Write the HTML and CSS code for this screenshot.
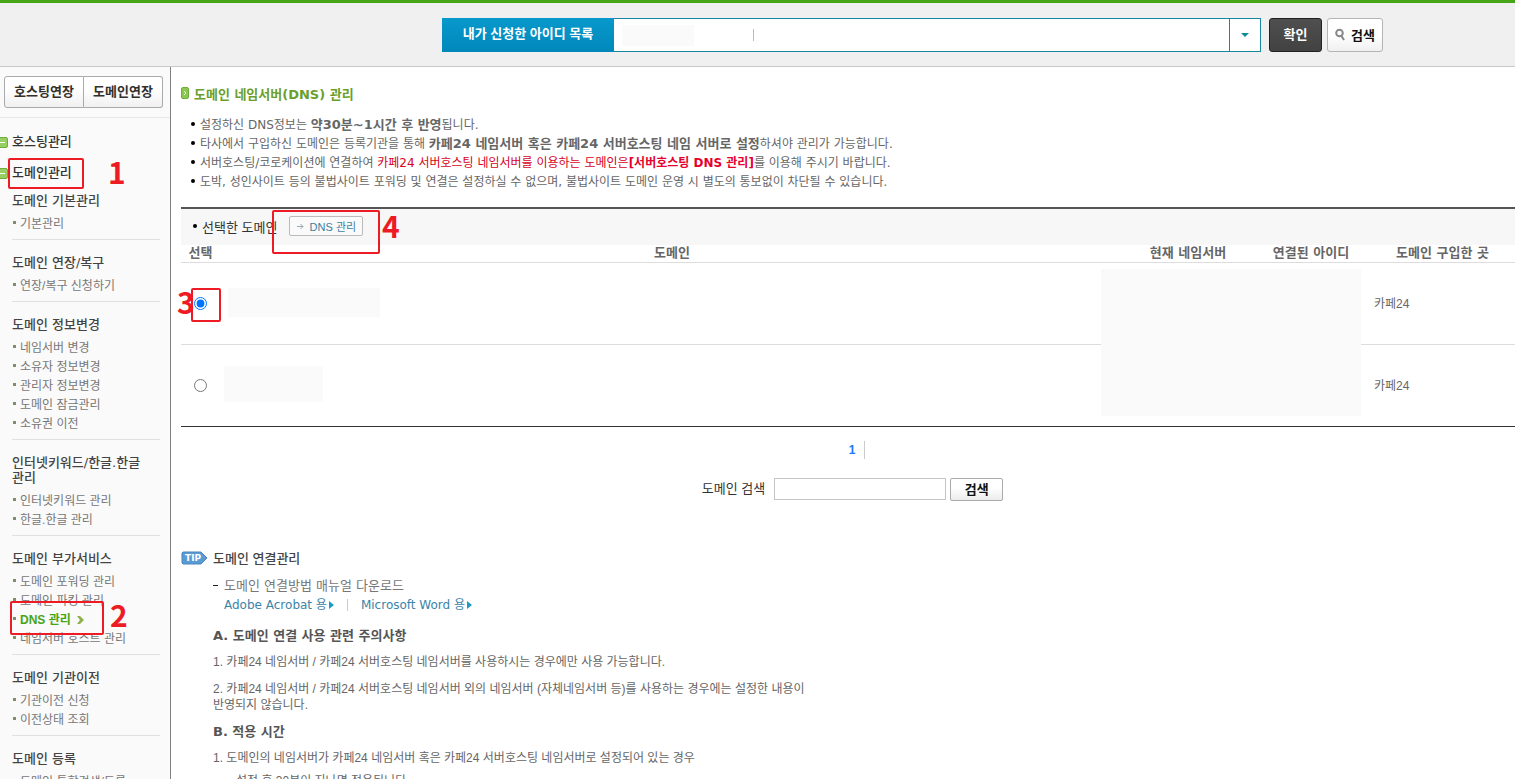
FILE: index.html
```
<!DOCTYPE html>
<html lang="ko">
<head>
    <meta charset="UTF-8">
    <meta name="viewport" content="width=device-width, initial-scale=1.0">
    <title>도메인 네임서버(DNS) 관리</title>
    <link rel="stylesheet" href="styles.css">
</head>
<body>
    <header class="top-bar">
        <div class="id-picker">
            <label class="id-label" for="idList">내가 신청한 아이디 목록</label>
            <div class="id-field">
                <select class="id-select" id="idList"><option></option></select>
                <span class="mask mask-id"></span>
                <span class="id-divider"></span>
                <span class="id-arrow">
                    <svg width="8" height="4" viewBox="0 0 8 4"><path d="M0 0h8L4 4z" fill="#0f8a9d"/></svg>
                </span>
            </div>
        </div>
        <button class="btn-confirm" type="button">확인</button>
        <button class="btn-find" type="button">
            <svg width="11" height="13" viewBox="0 0 11 13" fill="none" stroke="#888" stroke-width="2"><circle cx="4.5" cy="5" r="3.3"/><path d="M6.5 8l2.5 4"/></svg>
            검색
        </button>
    </header>

    <div class="layout">
        <nav class="sidebar">
            <div class="extend-buttons">
                <button type="button">호스팅연장</button>
                <button type="button">도메인연장</button>
            </div>
            <div class="menu">
                <h2 class="menu-head"><a href="#">호스팅관리</a></h2>
                <h2 class="menu-head"><a href="#">도메인관리</a></h2>

                <section class="group">
                    <h3>도메인 기본관리</h3>
                    <ul>
                        <li><a href="#">기본관리</a></li>
                    </ul>
                </section>
                <section class="group">
                    <h3>도메인 연장/복구</h3>
                    <ul>
                        <li><a href="#">연장/복구 신청하기</a></li>
                    </ul>
                </section>
                <section class="group">
                    <h3>도메인 정보변경</h3>
                    <ul>
                        <li><a href="#">네임서버 변경</a></li>
                        <li><a href="#">소유자 정보변경</a></li>
                        <li><a href="#">관리자 정보변경</a></li>
                        <li><a href="#">도메인 잠금관리</a></li>
                        <li><a href="#">소유권 이전</a></li>
                    </ul>
                </section>
                <section class="group">
                    <h3>인터넷키워드/한글.한글<br>관리</h3>
                    <ul>
                        <li><a href="#">인터넷키워드 관리</a></li>
                        <li><a href="#">한글.한글 관리</a></li>
                    </ul>
                </section>
                <section class="group">
                    <h3>도메인 부가서비스</h3>
                    <ul>
                        <li><a href="#">도메인 포워딩 관리</a></li>
                        <li><a href="#">도메인 파킹 관리</a></li>
                        <li class="active"><a href="#">DNS 관리 <svg width="8" height="8" viewBox="0 0 8 8" fill="#8fb04a"><path d="M0 0h3l4 4-4 4H0l3-4z"/></svg></a></li>
                        <li><a href="#">네임서버 호스트 관리</a></li>
                    </ul>
                </section>
                <section class="group">
                    <h3>도메인 기관이전</h3>
                    <ul>
                        <li><a href="#">기관이전 신청</a></li>
                        <li><a href="#">이전상태 조회</a></li>
                    </ul>
                </section>
                <section class="group">
                    <h3>도메인 등록</h3>
                    <ul>
                        <li><a href="#">도메인 통합검색/등록</a></li>
                    </ul>
                </section>
            </div>
        </nav>

        <main class="content">
            <h1 class="page-title">
                <svg width="8" height="12" viewBox="0 0 8 12"><rect x=".5" y=".5" width="7" height="11" rx="1.5" fill="#8cc751" stroke="#6fae3a"/><path d="M3 4l2 2-2 2" fill="none" stroke="#e6f5d4"/></svg>
                도메인 네임서버(DNS) 관리
            </h1>

            <ul class="notes">
                <li>설정하신 DNS정보는 <b>약30분~1시간 후 반영</b>됩니다.</li>
                <li>타사에서 구입하신 도메인은 등록기관을 통해 <b>카페24 네임서버 혹은 카페24 서버호스팅 네임 서버로 설정</b>하셔야 관리가 가능합니다.</li>
                <li>서버호스팅/코로케이션에 연결하여 <span class="red">카페24 서버호스팅 네임서버를 이용하는 도메인은<b>[서버호스팅 DNS 관리]</b></span>를 이용해 주시기 바랍니다.</li>
                <li>도박, 성인사이트 등의 불법사이트 포워딩 및 연결은 설정하실 수 없으며, 불법사이트 도메인 운영 시 별도의 통보없이 차단될 수 있습니다.</li>
            </ul>

            <div class="action-bar">
                <span class="picked">선택한 도메인</span>
                <button class="btn-dns" type="button">
                    <svg width="7" height="7" viewBox="0 0 7 7" fill="none" stroke="#9aa7ad"><path d="M0 3.5h6M3.5 1L6 3.5 3.5 6"/></svg>
                    DNS 관리
                </button>
            </div>

            <div class="table-wrap">
                <table class="domains">
                    <colgroup>
                        <col class="col-pick">
                        <col>
                        <col class="col-ns">
                        <col class="col-id">
                        <col class="col-shop">
                    </colgroup>
                    <thead>
                        <tr>
                            <th>선택</th>
                            <th>도메인</th>
                            <th>현재 네임서버</th>
                            <th>연결된 아이디</th>
                            <th>도메인 구입한 곳</th>
                        </tr>
                    </thead>
                    <tbody>
                        <tr>
                            <td><input type="radio" name="domain" aria-label="도메인 1" checked></td>
                            <td><span class="mask mask-first"></span></td>
                            <td></td>
                            <td></td>
                            <td>카페24</td>
                        </tr>
                        <tr>
                            <td><input type="radio" name="domain" aria-label="도메인 2"></td>
                            <td><span class="mask mask-second"></span></td>
                            <td></td>
                            <td></td>
                            <td>카페24</td>
                        </tr>
                    </tbody>
                </table>
                <span class="mask mask-columns"></span>
            </div>

            <div class="paging"><a href="#">1</a></div>

            <form class="search">
                <label for="domainSearch">도메인 검색</label>
                <input id="domainSearch" type="text">
                <button type="button">검색</button>
            </form>

            <section class="tip">
                <h2 class="tip-title">
                    <svg width="27" height="14" viewBox="0 0 27 14"><path d="M2 1h18l6 6-6 6H2L1 12V2z" fill="#5b9bd5" stroke="#4a86bd"/><text x="4" y="10" class="tip-badge">TIP</text></svg>
                    도메인 연결관리
                </h2>
                <div class="tip-body">
                    <p class="manual">도메인 연결방법 매뉴얼 다운로드</p>
                    <div class="downloads">
                        <a href="#">Adobe Acrobat 용<svg width="5" height="8" viewBox="0 0 5 8"><path d="M0 0l5 4-5 4z" fill="#1b9cc4"/></svg></a>
                        <a href="#">Microsoft Word 용<svg width="5" height="8" viewBox="0 0 5 8"><path d="M0 0l5 4-5 4z" fill="#1b9cc4"/></svg></a>
                    </div>
                    <h3>A. 도메인 연결 사용 관련 주의사항</h3>
                    <p>1. 카페24 네임서버 / 카페24 서버호스팅 네임서버를 사용하시는 경우에만 사용 가능합니다.</p>
                    <p>2. 카페24 네임서버 / 카페24 서버호스팅 네임서버 외의 네임서버 (자체네임서버 등)를 사용하는 경우에는 설정한 내용이<br>반영되지 않습니다.</p>
                    <h3>B. 적용 시간</h3>
                    <p>1. 도메인의 네임서버가 카페24 네임서버 혹은 카페24 서버호스팅 네임서버로 설정되어 있는 경우</p>
                    <p class="sub">설정 후 30분이 지나면 적용됩니다.</p>
                </div>
            </section>
        </main>
    </div>

    <!-- numbered guide marks -->
    <div class="mark mark-1"></div><span class="step step-1">1</span>
    <div class="mark mark-2"></div><span class="step step-2">2</span>
    <div class="mark mark-3"></div><span class="step step-3">3</span>
    <div class="mark mark-4"></div><span class="step step-4">4</span>
</body>
</html>
```
FILE: styles.css
```
* {
    margin: 0;
    padding: 0;
    box-sizing: border-box;
}

body {
    position: relative;
    display: flex;
    flex-direction: column;
    height: 100vh;
    overflow: hidden;
    font-family: "Liberation Sans", "Noto Sans CJK KR", sans-serif;
    font-size: 12px;
    color: #666;
    background: #fff;
}

a {
    color: inherit;
    text-decoration: none;
}

ul {
    list-style: none;
}

button,
input,
select {
    font-family: inherit;
}

button {
    padding-bottom: 3px;
    cursor: pointer;
}

.mask {
    display: block;
    background: #fafafa;
}

/* top bar */
.top-bar {
    display: flex;
    flex: none;
    height: 67px;
    padding: 15px 132px 0 442px;
    border-top: 3px solid #45a516;
    border-bottom: 1px solid #c8c8c8;
    background: #f0f0f0;
}

.id-picker {
    display: flex;
    flex: 1;
    height: 34px;
    margin-right: 8px;
}

.id-label {
    width: 172px;
    line-height: 32px;
    text-align: center;
    font-size: 13px;
    font-weight: bold;
    color: #fff;
    background: linear-gradient(#0899cc, #0088bb);
}

.id-field {
    position: relative;
    display: flex;
    flex: 1;
    border: 1px solid #1a87a0;
    border-left: 0;
    background: #fff;
}

.id-select {
    flex: 1;
    appearance: none;
    border: 0;
    background: transparent;
}

.mask-id {
    position: absolute;
    left: 8px;
    top: 6px;
    width: 72px;
    height: 21px;
}

.id-divider {
    position: absolute;
    left: 139px;
    top: 10px;
    width: 1px;
    height: 12px;
    background: #bbb;
}

.id-arrow {
    display: flex;
    align-items: center;
    justify-content: center;
    width: 31px;
    border-left: 1px solid #1a87a0;
}

.btn-confirm,
.btn-find {
    height: 34px;
    border-radius: 3px;
    font-size: 13px;
    font-weight: bold;
}

.btn-confirm {
    width: 53px;
    margin-right: 5px;
    border: 1px solid #222;
    color: #fff;
    background: linear-gradient(#4f4f4f, #424242);
}

.btn-find {
    display: flex;
    align-items: center;
    justify-content: center;
    gap: 5px;
    width: 56px;
    padding-bottom: 2px;
    border: 1px solid #b5b5b5;
    color: #111;
    background: linear-gradient(#fff 50%, #f0f0f0);
}

.layout {
    display: flex;
    flex: 1;
    min-height: 0;
}

/* left menu */
.sidebar {
    flex: none;
    width: 171px;
    overflow: hidden;
    border-right: 1px solid #808080;
    background: #fafafa;
}

.extend-buttons {
    display: flex;
    padding: 9px 7px 9px 4px;
    border-bottom: 1px solid #e8e8e8;
}

.extend-buttons button {
    flex: 1;
    height: 32px;
    border: 1px solid #aaa;
    border-radius: 3px 0 0 3px;
    font-size: 13px;
    font-weight: bold;
    color: #332f2a;
    background: linear-gradient(#fff 40%, #f0f0f0);
}

.extend-buttons button + button {
    border-left: 0;
    border-radius: 0 3px 3px 0;
}

.menu {
    padding: 8px 10px 0 12px;
}

.menu-head {
    position: relative;
    line-height: 31px;
    font-size: 13px;
    font-weight: 500;
    color: #333;
}

.menu-head::before {
    content: "";
    position: absolute;
    left: -14px;
    top: 11px;
    width: 10px;
    height: 9px;
    border: 1px solid #6fae3a;
    border-radius: 2px;
    background: linear-gradient(#fff, #fff) center / 6px 1px no-repeat #97cf63;
    left: -16px;
}

.group {
    padding: 5px 0 7px;
    border-bottom: 1px solid #e0e0e0;
}

.group + .group {
    padding-top: 15px;
}

.group h3 {
    margin-bottom: 5px;
    line-height: 15px;
    font-family: "DejaVu Sans", "Noto Sans CJK KR", sans-serif;
    font-size: 13px;
    font-weight: 500;
    color: #444;
    white-space: nowrap;
}

.group li {
    display: flex;
    align-items: center;
    gap: 4px;
    height: 19px;
    padding: 0 0 1px 1px;
    color: #777;
    white-space: nowrap;
}

.group li::before {
    content: "";
    width: 3px;
    height: 3px;
    background: #7d8f66;
}

.group .active {
    font-weight: bold;
    color: #45a516;
}

.active svg {
    margin-left: 3px;
}

/* main column */
.content {
    flex: 1;
    min-width: 0;
    padding: 15px 0 0 10px;
    overflow: hidden;
}

.page-title {
    display: flex;
    align-items: center;
    gap: 5px;
    height: 22px;
    font-family: "DejaVu Sans", "Noto Sans CJK KR", sans-serif;
    font-size: 13px;
    font-weight: bold;
    color: #6a9f2b;
}

.notes {
    padding: 10px 0 17px 10px;
    font-family: "DejaVu Sans", "Noto Sans CJK KR", sans-serif;
}

.notes b {
    font-size: 13px;
}

.notes li,
.picked {
    display: flex;
    align-items: center;
    white-space: pre;
}

.notes li {
    height: 19px;
}

.notes li::before,
.picked::before {
    content: "";
    width: 4px;
    height: 4px;
    margin-right: 5px;
    border-radius: 50%;
    background: #000;
}

.red {
    color: #d7001a;
}

.notes .red b {
    font-size: 12px;
    color: #e6002d;
}

.action-bar {
    display: flex;
    align-items: center;
    gap: 12px;
    height: 38px;
    padding: 0 0 2px 12px;
    border-top: 2px solid #555;
    background: #f7f7f7;
}

.picked {
    font-size: 13px;
    color: #333;
}

.btn-dns {
    display: flex;
    align-items: center;
    justify-content: center;
    gap: 6px;
    width: 74px;
    height: 20px;
    padding: 0;
    border: 1px solid #bbb;
    border-radius: 2px;
    font-size: 11px;
    color: #3d7f9f;
    background: #fafafa;
}

.table-wrap {
    position: relative;
}

.domains {
    width: 100%;
    table-layout: fixed;
    border-collapse: collapse;
    border-bottom: 1px solid #333;
}

.col-pick {
    width: 39px;
}

.col-ns {
    width: 134px;
}

.col-id {
    width: 112px;
}

.col-shop {
    width: 145px;
}

.domains th {
    height: 17px;
    line-height: 16px;
    font-family: "DejaVu Sans", "Noto Sans CJK KR", sans-serif;
    font-size: 13px;
    font-weight: bold;
    color: #666;
    white-space: nowrap;
}

.domains th:nth-child(3),
.domains th:nth-child(4) {
    padding-right: 6px;
}

.domains td {
    height: 82px;
    padding: 0 0 2px 4px;
    border-top: 1px solid #ddd;
    vertical-align: middle;
}

.domains td:first-child {
    padding: 0;
    text-align: center;
}

.domains input {
    width: 13px;
    height: 13px;
    vertical-align: middle;
}

.mask-first {
    width: 152px;
    height: 29px;
    margin-left: 4px;
}

.mask-second {
    width: 99px;
    height: 36px;
}

.mask-columns {
    position: absolute;
    right: 154px;
    top: 24px;
    width: 260px;
    height: 147px;
}

.paging {
    display: flex;
    justify-content: center;
    padding: 14px 0 0 18px;
}

.paging a {
    padding-right: 9px;
    border-right: 1px solid #ccc;
    line-height: 18px;
    font-weight: bold;
    color: #1a75ff;
}

.search {
    display: flex;
    align-items: center;
    justify-content: center;
    padding: 19px 0 0 9px;
}

.search label {
    margin-right: 9px;
    padding-bottom: 4px;
    font-size: 13px;
    color: #333;
}

.search input {
    width: 172px;
    height: 22px;
    margin-right: 4px;
    border: 1px solid #c4c4c4;
}

.search button {
    width: 53px;
    height: 23px;
    border: 1px solid #aaa;
    border-radius: 2px;
    font-size: 13px;
    font-weight: bold;
    color: #111;
    background: linear-gradient(#fff 40%, #ececec);
}

/* tip */
.tip {
    padding-top: 47px;
}

.tip-title {
    display: flex;
    align-items: center;
    gap: 5px;
    height: 20px;
    font-size: 13px;
    font-weight: 500;
    color: #444;
}

.tip-badge {
    font: bold 9px "DejaVu Sans", sans-serif;
    fill: #fff;
}

.tip-body {
    padding-left: 32px;
}

.tip-body p {
    margin-bottom: 11px;
    line-height: 16px;
}

.tip-body h3 {
    margin-bottom: 10px;
    line-height: 16px;
    font-family: "DejaVu Sans", "Noto Sans CJK KR", sans-serif;
    font-size: 13px;
    color: #555;
}

.tip-body .manual {
    display: flex;
    align-items: center;
    gap: 6px;
    margin: 8px 0 0;
    line-height: 20px;
    font-family: "DejaVu Sans", "Noto Sans CJK KR", sans-serif;
    font-size: 13px;
    color: #777;
}

.manual::before {
    content: "";
    width: 5px;
    height: 1px;
    background: #222;
}

.downloads {
    display: flex;
    padding-left: 11px;
    margin: 1px 0 15px;
    line-height: 16px;
    font-family: "DejaVu Sans", "Noto Sans CJK KR", sans-serif;
    color: #3a84a8;
}

.downloads a + a {
    margin-left: 13px;
    padding-left: 14px;
    background: linear-gradient(#ccc, #ccc) left center / 1px 12px no-repeat;
}

.downloads svg {
    margin-left: 2px;
}

.tip-body .sub {
    padding-left: 23px;
    margin-top: -4px;
}

/* guide marks */
.mark {
    position: absolute;
    border: 2px solid #ed1c24;
    border-radius: 2px;
}

.step {
    position: absolute;
    line-height: 30px;
    font-family: "Noto Sans CJK KR", sans-serif;
    font-size: 30px;
    font-weight: bold;
    color: #ed1c24;
}

.mark-1 {
    left: 8px;
    top: 158px;
    width: 76px;
    height: 31px;
}

.mark-2 {
    left: 10px;
    top: 601px;
    width: 94px;
    height: 34px;
}

.mark-3 {
    left: 191px;
    top: 288px;
    width: 30px;
    height: 34px;
}

.mark-4 {
    left: 272px;
    top: 210px;
    width: 108px;
    height: 44px;
}

.step-1 {
    left: 108px;
    top: 156px;
}

.step-2 {
    left: 110px;
    top: 599px;
}

.step-3 {
    left: 177px;
    top: 286px;
}

.step-4 {
    left: 382px;
    top: 210px;
}
```
